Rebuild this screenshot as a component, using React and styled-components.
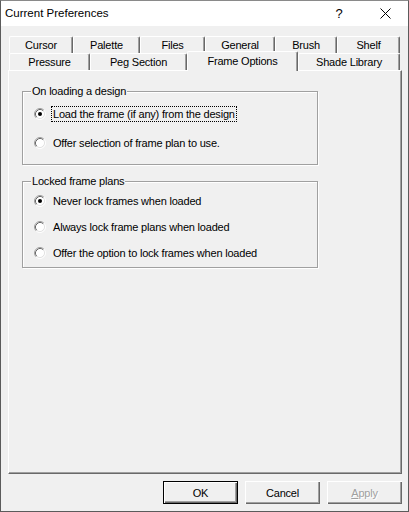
import styled, { createGlobalStyle } from 'styled-components'

const GlobalStyle = createGlobalStyle`
  html, body {
    margin: 0;
    padding: 0;
    background: #f0f0f0;
  }
  * {
    box-sizing: border-box;
  }
`

const rowOne = [
  { label: 'Cursor', width: 64 },
  { label: 'Palette', width: 67 },
  { label: 'Files', width: 65 },
  { label: 'General', width: 70 },
  { label: 'Brush', width: 62 },
  { label: 'Shelf', width: 63 },
]

const rowTwo = [
  { label: 'Pressure', width: 81 },
  { label: 'Peg Section', width: 97 },
  { label: 'Frame Options', width: 111, active: true },
  { label: 'Shade Library', width: 102 },
]

const loadingOptions = [
  { label: 'Load the frame (if any) from the design', checked: true, focused: true },
  { label: 'Offer selection of frame plan to use.' },
]

const lockOptions = [
  { label: 'Never lock frames when loaded', checked: true },
  { label: 'Always lock frame plans when loaded' },
  { label: 'Offer the option to lock frames when loaded' },
]

const Radio = ({ checked }) => (
  <svg width="12" height="12" viewBox="0 0 12 12">
    <circle cx="6" cy="6" r="4.5" fill="#fff" />
    <path d="M2.11 9.89 A5.5 5.5 0 0 1 9.89 2.11" fill="none" stroke="#a0a0a0" />
    <path d="M9.89 2.11 A5.5 5.5 0 0 1 2.11 9.89" fill="none" stroke="#fff" />
    <path d="M2.82 9.18 A4.5 4.5 0 0 1 9.18 2.82" fill="none" stroke="#696969" />
    <path d="M9.18 2.82 A4.5 4.5 0 0 1 2.82 9.18" fill="none" stroke="#e3e3e3" />
    {checked && <circle cx="6" cy="6" r="2" fill="#000" />}
  </svg>
)

const CloseIcon = () => (
  <svg width="11" height="11" viewBox="0 0 11 11">
    <path d="M0.5 0.5 L10.5 10.5 M10.5 0.5 L0.5 10.5" stroke="#000" strokeWidth="1" />
  </svg>
)

const App = () => {
  return (
    <>
      <GlobalStyle />
      <Window>
        <TitleBar>
          <Title>Current Preferences</Title>
          <CaptionButton>?</CaptionButton>
          <CaptionButton><CloseIcon /></CaptionButton>
        </TitleBar>

        <Body>
          <TabStrip>
            <TabRow>
              {rowOne.map(t => (
                <Tab key={t.label} $width={t.width}>{t.label}</Tab>
              ))}
            </TabRow>
            <TabRow>
              {rowTwo.map(t => (
                <Tab key={t.label} $width={t.width} $active={t.active}>{t.label}</Tab>
              ))}
            </TabRow>
          </TabStrip>

          <Panel>
            <GroupBox $top={7} $height={74}>
              <GroupLabel>On loading a design</GroupLabel>
              {loadingOptions.map(o => (
                <RadioRow key={o.label} $rowHeight={29}>
                  <Radio checked={o.checked} />
                  <RadioText $focused={o.focused}>{o.label}</RadioText>
                </RadioRow>
              ))}
            </GroupBox>

            <GroupBox $top={6} $height={87} $gap={16}>
              <GroupLabel>Locked frame plans</GroupLabel>
              {lockOptions.map(o => (
                <RadioRow key={o.label} $rowHeight={26}>
                  <Radio checked={o.checked} />
                  <RadioText>{o.label}</RadioText>
                </RadioRow>
              ))}
            </GroupBox>
          </Panel>

          <Footer>
            <Button $default>OK</Button>
            <Button>Cancel</Button>
            <Button disabled><u>A</u>pply</Button>
          </Footer>
        </Body>
      </Window>
    </>
  )
}

export default App

const Window = styled.div`
  width: 409px;
  height: 512px;
  border: 1px solid #5b5b5b;
  border-top-color: #8a8a8a;
  background: #f0f0f0;
  display: flex;
  flex-direction: column;
  font-family: "Liberation Sans", Arial, sans-serif;
  font-size: 11px;
  letter-spacing: -0.2px;
  color: #000;
`

const TitleBar = styled.div`
  height: 25px;
  background: #fff;
  display: flex;
  align-items: center;
`

const Title = styled.div`
  flex: 1;
  padding-left: 4px;
  font-size: 11.5px;
  letter-spacing: 0;
  line-height: 25px;
`

const CaptionButton = styled.div`
  width: 46px;
  height: 25px;
  display: flex;
  align-items: center;
  justify-content: center;
  font-size: 13px;
  letter-spacing: 0;
`

const Body = styled.div`
  flex: 1;
  display: flex;
  flex-direction: column;
  padding: 10px 6px 0 7px;
`

const TabStrip = styled.div`
  display: flex;
  flex-direction: column;
  padding-left: 1px;
`

const TabRow = styled.div`
  display: flex;
  height: 17px;
`

const Tab = styled.div`
  position: relative;
  width: ${p => p.$width}px;
  height: ${p => (p.$active ? 20 : 17)}px;
  margin-top: ${p => (p.$active ? -2 : 0)}px;
  z-index: ${p => (p.$active ? 2 : 0)};
  background: #f0f0f0;
  border-left: 1px solid #fff;
  border-top: 1px solid #fff;
  border-right: 1px solid #696969;
  border-radius: 2px 2px 0 0;
  box-shadow: inset -1px 0 0 #a0a0a0;
  display: flex;
  justify-content: center;
  padding-top: ${p => (p.$active ? 3 : 2)}px;
  line-height: 13px;
  white-space: nowrap;
`

const Panel = styled.div`
  width: 394px;
  height: 404px;
  background: #f0f0f0;
  border-left: 1px solid #fff;
  border-top: 1px solid #fff;
  border-right: 1px solid #696969;
  border-bottom: 1px solid #696969;
  box-shadow: inset -1px -1px 0 #a0a0a0;
  padding: 20px 0 0 13px;
  display: flex;
  flex-direction: column;
`

const GroupBox = styled.div`
  position: relative;
  width: 296px;
  height: ${p => p.$height}px;
  margin-top: ${p => p.$gap || 0}px;
  border: 1px solid #a0a0a0;
  box-shadow: inset 1px 1px 0 #fff, 1px 1px 0 #fff;
  padding: ${p => p.$top}px 0 0 11px;
  display: flex;
  flex-direction: column;
`

const GroupLabel = styled.span`
  position: absolute;
  top: -8px;
  left: 8px;
  padding: 0 1px;
  background: #f0f0f0;
  line-height: 14px;
`

const RadioRow = styled.div`
  height: ${p => p.$rowHeight}px;
  display: flex;
  align-items: center;
  gap: 5px;
`

const RadioText = styled.span`
  padding: 0 1px;
  line-height: 14px;
  border: 1px dotted ${p => (p.$focused ? '#000' : 'transparent')};
  white-space: nowrap;
`

const Footer = styled.div`
  display: flex;
  justify-content: flex-end;
  gap: 7px;
  padding-top: 7px;
`

const Button = styled.button`
  width: 75px;
  height: 23px;
  padding: 0;
  font-family: "Liberation Sans", Arial, sans-serif;
  font-size: 11px;
  letter-spacing: -0.2px;
  color: ${p => (p.disabled ? '#a0a0a0' : '#000')};
  text-shadow: ${p => (p.disabled ? '1px 1px 0 #fff' : 'none')};
  background: #f0f0f0;
  border: ${p => (p.$default ? '1px solid #000' : '0')};
  box-shadow: inset 1px 1px 0 #fff, inset -1px -1px 0 #696969, inset -2px -2px 0 #a0a0a0;

  u {
    text-decoration: underline;
  }
`
